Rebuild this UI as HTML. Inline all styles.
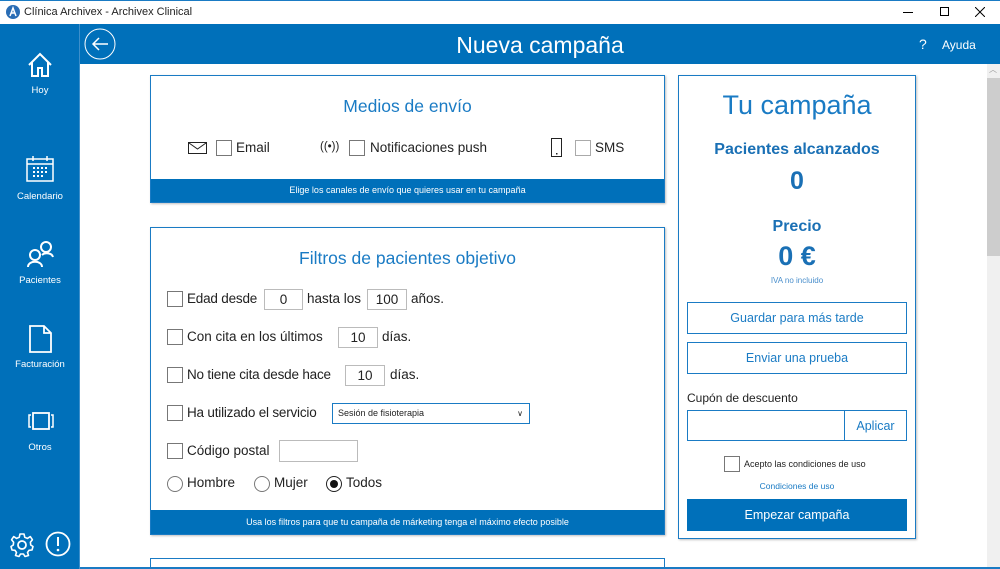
<!DOCTYPE html>
<html><head><meta charset="utf-8"><style>
*{box-sizing:border-box;margin:0;padding:0}
html{width:1000px;height:569px;overflow:hidden}
body{width:1000px;height:569px;overflow:hidden;background:#fff;font-family:"Liberation Sans",sans-serif;position:relative;color:#222}
.a{position:absolute}
.blue{background:#0070ba}
.t{position:absolute;white-space:nowrap}
.cb{position:absolute;width:16px;height:16px;border:1px solid #777;background:#fff}
.in{position:absolute;border:1px solid #bbb;background:#fff;font-size:13.5px;text-align:center;line-height:19px}
.lbl{font-size:13.5px;color:#222}
.card{position:absolute;border:1px solid #1a7bc4;background:#fff;box-shadow:1px 1px 2px rgba(0,0,0,.25)}
.side{color:#fff;font-size:9.5px;text-align:center;width:80px;left:0}
.rad{position:absolute;width:16px;height:16px;border:1px solid #777;border-radius:50%;background:#fff}
.btn{position:absolute;border:1px solid #1a7bc4;color:#1a7bc4;font-size:12.5px;text-align:center;background:#fff}
</style></head><body>
<div class="a" style="left:0;top:0;width:1000px;height:1px;background:#1a7bc4"></div>
<svg class="a" style="left:6px;top:5px" width="14" height="14" viewBox="0 0 14 14"><circle cx="7" cy="7" r="7" fill="#2a6db5"/><path d="M4 11L7 3L10 11M5.3 8h3.4" stroke="#fff" stroke-width="1.5" fill="none"/></svg>
<div class="t" style="left:24px;top:6px;font-size:11px">Clínica Archivex - Archivex Clinical</div>
<div class="a" style="left:903px;top:12px;width:10px;height:1px;background:#000"></div>
<div class="a" style="left:940px;top:7px;width:9px;height:9px;border:1px solid #000"></div>
<svg class="a" style="left:975px;top:7px" width="10" height="10"><path d="M0 0L10 10M10 0L0 10" stroke="#000" stroke-width="1"/></svg>
<div class="a blue" style="left:0;top:24px;width:80px;height:545px"></div>
<div class="a blue" style="left:80px;top:24px;width:920px;height:40px"></div>
<div class="a" style="left:79px;top:24px;width:1px;height:545px;background:#3d8fcb"></div>
<svg class="a" style="left:84px;top:28px" width="32" height="32"><circle cx="16" cy="16" r="15" stroke="#fff" fill="none" stroke-width="1"/><path d="M24 16H9M15 10l-6 6 6 6" stroke="#fff" fill="none" stroke-width="1.5"/></svg>
<div class="t" style="left:0;width:1080px;top:32px;text-align:center;font-size:23px;color:#fff">Nueva campaña</div>
<div class="t" style="left:919px;top:36px;font-size:14px;color:#fff">?</div>
<div class="t" style="left:942px;top:38px;font-size:12px;color:#fff">Ayuda</div>
<svg class="a" style="left:27px;top:52px" width="26" height="26" viewBox="0 0 26 26"><path d="M2 13L13 2L24 13M5 10V24H11V16H15V24H21V10" stroke="#fff" stroke-width="2" fill="none"/></svg>
<div class="t side" style="top:85px">Hoy</div>
<svg class="a" style="left:26px;top:156px" width="28" height="26" viewBox="0 0 28 26"><rect x="1" y="3" width="26" height="22" stroke="#fff" stroke-width="1.5" fill="none"/><path d="M1 8H27M7 0V5M21 0V5" stroke="#fff" stroke-width="1.5"/><g fill="#fff"><rect x="7" y="11" width="2" height="2"/><rect x="11" y="11" width="2" height="2"/><rect x="15" y="11" width="2" height="2"/><rect x="19" y="11" width="2" height="2"/><rect x="7" y="15" width="2" height="2"/><rect x="11" y="15" width="2" height="2"/><rect x="15" y="15" width="2" height="2"/><rect x="19" y="15" width="2" height="2"/><rect x="7" y="19" width="2" height="2"/><rect x="11" y="19" width="2" height="2"/><rect x="15" y="19" width="2" height="2"/></g></svg>
<div class="t side" style="top:191px">Calendario</div>
<svg class="a" style="left:27px;top:240px" width="28" height="28" viewBox="0 0 28 28"><circle cx="19" cy="7" r="5" stroke="#fff" stroke-width="2" fill="none"/><circle cx="8" cy="15" r="5" stroke="#fff" stroke-width="2" fill="none"/><path d="M1 27C1 20 15 20 15 27M15 15C18 12 25 13 26 17" stroke="#fff" stroke-width="2" fill="none"/></svg>
<div class="t side" style="top:275px">Pacientes</div>
<svg class="a" style="left:29px;top:325px" width="24" height="28" viewBox="0 0 24 28"><path d="M1 1H15L22 8V27H1Z M15 1V8H22" stroke="#fff" stroke-width="1.8" fill="none"/></svg>
<div class="t side" style="top:359px">Facturación</div>
<svg class="a" style="left:28px;top:412px" width="26" height="18" viewBox="0 0 26 18"><rect x="5" y="1" width="16" height="16" stroke="#fff" stroke-width="1.8" fill="none"/><path d="M3 3H1V15H3M23 3H25V15H23" stroke="#fff" stroke-width="1.5" fill="none"/></svg>
<div class="t side" style="top:442px">Otros</div>
<svg class="a" style="left:9px;top:532px" width="26" height="26" viewBox="0 0 26 26"><circle cx="13" cy="13" r="4" stroke="#fff" stroke-width="1.8" fill="none"/><path d="M11 2H15L15.8 5.3L18.4 6.4L21.3 4.6L23.4 7.7L21.4 10.3L21.7 13L24 14.5L23 18L20 18.3L18.5 20.5L19.5 23.5L16 24.5L14.5 22H11.5L10 24.5L6.5 23.5L7.5 20.5L6 18.3L3 18L2 14.5L4.3 13L4.6 10.3L2.6 7.7L4.7 4.6L7.6 6.4L10.2 5.3Z" stroke="#fff" stroke-width="1.6" fill="none" stroke-linejoin="round"/></svg>
<svg class="a" style="left:45px;top:531px" width="26" height="26"><circle cx="13" cy="13" r="11.5" stroke="#fff" stroke-width="1.8" fill="none"/><path d="M13 6V15" stroke="#fff" stroke-width="2"/><circle cx="13" cy="19" r="1.3" fill="#fff"/></svg>
<div class="a" style="left:987px;top:64px;width:13px;height:505px;background:#f0f0f0"></div>
<div class="a" style="left:987px;top:78px;width:13px;height:178px;background:#cdcdcd"></div>
<div class="t" style="left:989px;top:64px;font-size:8px;color:#999">︿</div>
<div class="card" style="left:150px;top:558px;width:515px;height:11px;box-shadow:none;border-bottom:none"></div>
<div class="a" style="left:80px;top:567px;width:920px;height:2px;background:#1a7bc4"></div>
<div class="card" style="left:150px;top:75px;width:515px;height:128px">
<div class="t" style="left:0;width:513px;top:20px;text-align:center;font-size:17.5px;color:#1a7bc4">Medios de envío</div>
<div class="blue a" style="left:0;bottom:0;width:513px;height:23px;color:#fff;font-size:9px;text-align:center;line-height:23px">Elige los canales de envío que quieres usar en tu campaña</div>
</div>
<svg class="a" style="left:188px;top:142px" width="19" height="12"><rect x=".5" y=".5" width="18" height="11" stroke="#222" fill="none"/><path d="M1 1L9.5 7L18 1" stroke="#222" fill="none"/></svg>
<div class="cb" style="left:216px;top:140px"></div><div class="t lbl" style="left:236px;top:140px">Email</div>
<div class="t" style="left:320px;top:141px;font-size:11.5px">((•))</div>
<div class="cb" style="left:349px;top:140px"></div><div class="t lbl" style="left:370px;top:140px">Notificaciones push</div>
<svg class="a" style="left:551px;top:138px" width="12" height="20"><rect x=".5" y=".5" width="10" height="18" stroke="#222" fill="none"/><rect x="5" y="15" width="1.5" height="1.5" fill="#222"/></svg>
<div class="cb" style="left:575px;top:140px;border-color:#aaa"></div><div class="t lbl" style="left:595px;top:140px">SMS</div>
<div class="card" style="left:150px;top:227px;width:515px;height:308px">
<div class="t" style="left:0;width:513px;top:20px;text-align:center;font-size:17.5px;color:#1a7bc4">Filtros de pacientes objetivo</div>
<div class="blue a" style="left:0;bottom:0;width:513px;height:24px;color:#fff;font-size:9px;text-align:center;line-height:24px">Usa los filtros para que tu campaña de márketing tenga el máximo efecto posible</div>
</div>
<div class="cb" style="left:167px;top:291px"></div><div class="t lbl" style="left:187px;top:291px;letter-spacing:-.2px">Edad desde</div>
<div class="in" style="left:264px;top:289px;width:39px;height:21px">0</div>
<div class="t lbl" style="left:307px;top:291px">hasta los</div>
<div class="in" style="left:367px;top:289px;width:40px;height:21px">100</div>
<div class="t lbl" style="left:411px;top:291px">años.</div>
<div class="cb" style="left:167px;top:329px"></div><div class="t lbl" style="left:187px;top:329px">Con cita en los últimos</div>
<div class="in" style="left:338px;top:327px;width:40px;height:21px">10</div>
<div class="t lbl" style="left:382px;top:329px">días.</div>
<div class="cb" style="left:167px;top:367px"></div><div class="t lbl" style="left:187px;top:367px;letter-spacing:-.2px">No tiene cita desde hace</div>
<div class="in" style="left:345px;top:365px;width:40px;height:21px">10</div>
<div class="t lbl" style="left:390px;top:367px">días.</div>
<div class="cb" style="left:167px;top:405px"></div><div class="t lbl" style="left:187px;top:405px;letter-spacing:-.2px">Ha utilizado el servicio</div>
<div class="a" style="left:332px;top:403px;width:198px;height:21px;border:1px solid #1a7bc4;font-size:9px;line-height:19px;padding-left:5px">Sesión de fisioterapia<span style="position:absolute;right:6px;top:0;font-size:8px">∨</span></div>
<div class="cb" style="left:167px;top:443px"></div><div class="t lbl" style="left:187px;top:443px">Código postal</div>
<div class="in" style="left:279px;top:440px;width:79px;height:22px"></div>
<div class="rad" style="left:167px;top:476px"></div><div class="t lbl" style="left:187px;top:475px">Hombre</div>
<div class="rad" style="left:254px;top:476px"></div><div class="t lbl" style="left:274px;top:475px">Mujer</div>
<div class="rad" style="left:326px;top:476px;border-color:#222"><div class="a" style="left:3px;top:3px;width:8px;height:8px;border-radius:50%;background:#111"></div></div><div class="t lbl" style="left:346px;top:475px">Todos</div>
<div class="card" style="left:678px;top:75px;width:238px;height:464px">
<div class="t" style="left:0;width:236px;top:14px;text-align:center;font-size:27px;color:#1a7bc4;font-weight:300">Tu campaña</div>
<div class="t" style="left:0;width:236px;top:65px;text-align:center;font-size:16px;font-weight:bold;color:#1a70b5">Pacientes alcanzados</div>
<div class="t" style="left:0;width:236px;top:91px;text-align:center;font-size:25px;font-weight:bold;color:#1a70b5">0</div>
<div class="t" style="left:0;width:236px;top:142px;text-align:center;font-size:16px;font-weight:bold;color:#1a70b5">Precio</div>
<div class="t" style="left:0;width:236px;top:165px;text-align:center;font-size:27px;font-weight:bold;color:#1a70b5">0 €</div>
<div class="t" style="left:0;width:236px;top:200px;text-align:center;font-size:8px;color:#4a8fcc">IVA no incluido</div>
</div>
<div class="btn" style="left:687px;top:302px;width:220px;height:32px;line-height:30px">Guardar para más tarde</div>
<div class="btn" style="left:687px;top:342px;width:220px;height:32px;line-height:30px">Enviar una prueba</div>
<div class="t" style="left:687px;top:391px;font-size:12px">Cupón de descuento</div>
<div class="btn" style="left:687px;top:410px;width:158px;height:31px"></div>
<div class="btn" style="left:844px;top:410px;width:63px;height:31px;line-height:30px">Aplicar</div>
<div class="cb" style="left:724px;top:456px"></div>
<div class="t" style="left:744px;top:459px;font-size:9px">Acepto las condiciones de uso</div>
<div class="t" style="left:678px;width:238px;text-align:center;top:481px;font-size:8.5px;color:#1a7bc4">Condiciones de uso</div>
<div class="a blue" style="left:687px;top:499px;width:220px;height:32px;color:#fff;font-size:12.5px;text-align:center;line-height:32px">Empezar campaña</div>
</body></html>
